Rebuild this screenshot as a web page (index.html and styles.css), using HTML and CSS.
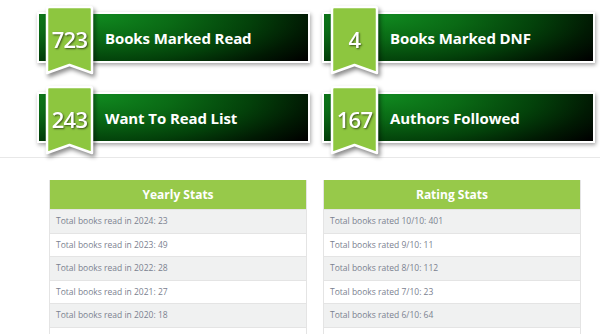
FILE: index.html
```html
<!DOCTYPE html>
<html lang="en">
<head>
    <meta charset="UTF-8">
    <meta name="viewport" content="width=device-width, initial-scale=1.0">
    <title>Reading Stats</title>
    <link rel="stylesheet" href="styles.css">
</head>
<body>

    <div class="cards">
        <div class="card">
            <div class="ribbon">
                <svg width="51" height="71" viewBox="0 0 51 71">
                    <path d="M3 4 Q3 2 5 2 L46 2 Q48 2 48 4 L48 68 L25.5 60 L3 68 Z" fill="#8dc63f" stroke="#fff" stroke-width="2.5" stroke-linejoin="round"/>
                </svg>
                <span class="num">723</span>
            </div>
            <span class="label">Books Marked Read</span>
        </div>
        <div class="card">
            <div class="ribbon">
                <svg width="51" height="71" viewBox="0 0 51 71">
                    <path d="M3 4 Q3 2 5 2 L46 2 Q48 2 48 4 L48 68 L25.5 60 L3 68 Z" fill="#8dc63f" stroke="#fff" stroke-width="2.5" stroke-linejoin="round"/>
                </svg>
                <span class="num">4</span>
            </div>
            <span class="label">Books Marked DNF</span>
        </div>
        <div class="card">
            <div class="ribbon">
                <svg width="51" height="71" viewBox="0 0 51 71">
                    <path d="M3 4 Q3 2 5 2 L46 2 Q48 2 48 4 L48 68 L25.5 60 L3 68 Z" fill="#8dc63f" stroke="#fff" stroke-width="2.5" stroke-linejoin="round"/>
                </svg>
                <span class="num">243</span>
            </div>
            <span class="label">Want To Read List</span>
        </div>
        <div class="card">
            <div class="ribbon">
                <svg width="51" height="71" viewBox="0 0 51 71">
                    <path d="M3 4 Q3 2 5 2 L46 2 Q48 2 48 4 L48 68 L25.5 60 L3 68 Z" fill="#8dc63f" stroke="#fff" stroke-width="2.5" stroke-linejoin="round"/>
                </svg>
                <span class="num">167</span>
            </div>
            <span class="label">Authors Followed</span>
        </div>
    </div>

    <div class="tables">
        <div class="stats">
            <div class="stats-head">Yearly Stats</div>
            <div class="stats-row">Total books read in 2024: 23</div>
            <div class="stats-row">Total books read in 2023: 49</div>
            <div class="stats-row">Total books read in 2022: 28</div>
            <div class="stats-row">Total books read in 2021: 27</div>
            <div class="stats-row">Total books read in 2020: 18</div>
            <div class="stats-row"></div>
        </div>
        <div class="stats">
            <div class="stats-head">Rating Stats</div>
            <div class="stats-row">Total books rated 10/10: 401</div>
            <div class="stats-row">Total books rated 9/10: 11</div>
            <div class="stats-row">Total books rated 8/10: 112</div>
            <div class="stats-row">Total books rated 7/10: 23</div>
            <div class="stats-row">Total books rated 6/10: 64</div>
            <div class="stats-row"></div>
        </div>
    </div>

</body>
</html>
```

FILE: styles.css
```css
body {
    font-family: "Open Sans", "Noto Sans", sans-serif;
    background-color: #fff;
    margin: 0;
    overflow: hidden;
}

.cards {
    display: grid;
    grid-template-columns: 273px 273px;
    column-gap: 12px;
    row-gap: 29px;
    padding: 12px 0 14px 37px;
    border-bottom: 1px solid #e8e8e8;
}

.card {
    position: relative;
    height: 47px;
    border: 2px solid #fff;
    background: radial-gradient(ellipse 95% 160% at 22% 5%, #10881f 0%, #0a6a15 30%, #03410a 60%, #011a03 82%, #000 100%);
    box-shadow: 1px 2px 4px rgba(0,0,0,0.35);
    display: flex;
    align-items: center;
}

.ribbon {
    position: absolute;
    left: 5px;
    top: -9px;
    width: 51px;
    height: 71px;
    filter: drop-shadow(2px 3px 2px rgba(0,0,0,0.45));
}

.ribbon svg {
    display: block;
}

.num {
    position: absolute;
    left: 0;
    right: 0;
    top: 19px;
    text-align: center;
    color: #fff;
    font-size: 22px;
    font-weight: 600;
    letter-spacing: -0.8px;
    text-shadow: 1px 1px 2px rgba(0,0,0,0.6);
}

.label {
    margin-left: 66px;
    color: #fff;
    font-size: 15px;
    font-weight: 700;
    letter-spacing: -0.1px;
}

.tables {
    display: grid;
    grid-template-columns: 258px 258px;
    column-gap: 16px;
    padding: 22px 0 0 49px;
}

.stats {
    border: 1px solid #e4e4e4;
    border-top: none;
}

.stats-head {
    height: 29px;
    line-height: 29px;
    background-color: #97c94a;
    color: #fff;
    text-align: center;
    font-size: 12px;
    font-weight: 700;
}

.stats-row {
    height: 22.6px;
    line-height: 22.6px;
    padding-left: 6px;
    font-size: 8.5px;
    color: #7b8190;
    border-top: 1px solid #e4e4e4;
}

.stats-row:nth-child(even) {
    background-color: #f0f1f1;
}
```
